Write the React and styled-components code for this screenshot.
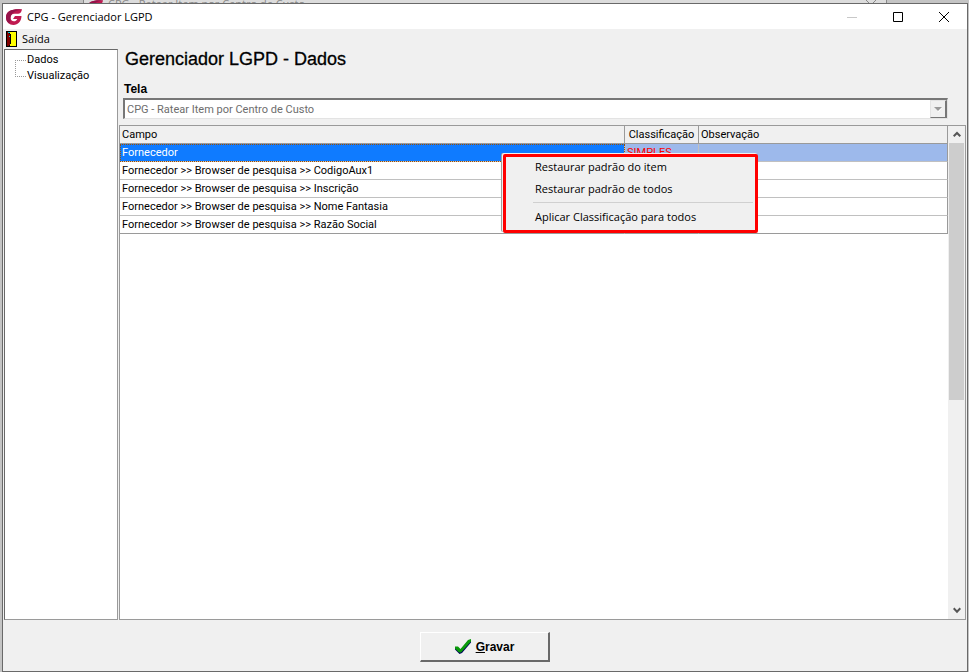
import React from 'react'
import styled, { createGlobalStyle } from 'styled-components'

const fields = [
    { id: 1, name: 'Fornecedor', level: 'SIMPLES', note: '' },
    { id: 2, name: 'Fornecedor >> Browser de pesquisa >> CodigoAux1', level: '', note: '' },
    { id: 3, name: 'Fornecedor >> Browser de pesquisa >> Inscrição', level: '', note: '' },
    { id: 4, name: 'Fornecedor >> Browser de pesquisa >> Nome Fantasia', level: '', note: '' },
    { id: 5, name: 'Fornecedor >> Browser de pesquisa >> Razão Social', level: '', note: '' },
]

const Logo = () => (
    <svg width="16" height="16" viewBox="0 0 16 16" aria-hidden="true">
        <path d="M16 0.300C12 0 6.500 0 3.500 2C1 3.700 0 5.800 0 8.500C0 12.800 3.300 16 7.500 16C12 16 15.300 12.500 15.500 7H9L7 10H11.300C10.500 11.600 9.300 12.300 8 12.300C5.800 12.300 4.500 10.700 4.500 8.600C4.500 6.300 6 4.800 8.500 4.800H12C14 4.800 15.500 3.500 16 0.300Z" fill="#c01a50" />
        <path d="M0 8.500C0 5.800 1 3.700 3.500 2C6.500 0 12 0 16 0.300C11 1.500 6 3 4.700 7.500C4 10 5 13 3 14.500C1.200 13.200 0 11 0 8.500Z" fill="#96134a" />
    </svg>
)

const Door = () => (
    <svg width="11" height="16" viewBox="0 0 11 16" aria-hidden="true" shapeRendering="crispEdges">
        <rect width="11" height="16" fill="#000" />
        <rect x="4" y="1" width="6" height="14" fill="#ff0" />
        <path d="M1 1H2V2H3V3H4V14H3V15H1Z" fill="#800000" />
        <path d="M4 3H5V13H4Z" fill="#000" />
        <path d="M2 1H4V2H2Z" fill="#00d8d8" />
        <path d="M3 5H4V6H3Z" fill="#00d8d8" />
    </svg>
)

const Check = () => (
    <svg width="17" height="16" viewBox="0 0 17 16" aria-hidden="true">
        <path d="M0 8.500H3L5.500 11L13 2L16 1V3.500L7 14L4.500 15L0 10.500Z" fill="#000060" />
        <path d="M0 7.500H3L5.500 10L13 1L16 0V2.500L6 13.500H4L0 9.500Z" fill="#0a9a0a" />
    </svg>
)

const Chevron = ({ down }) => (
    <svg width="8" height="7" viewBox="0 0 8 7" aria-hidden="true">
        <path d={down ? 'M0.700 1.300L4 4.700L7.300 1.300' : 'M0.700 5.300L4 2L7.300 5.300'} fill="none" stroke="#555" strokeWidth="2" />
    </svg>
)

function TitleBar() {
    return (
        <TitleWrapper>
            <Logo />
            <Title>CPG - Gerenciador LGPD</Title>
            <WindowButton aria-label="Minimizar" disabled>
                <svg width="10" height="10"><path d="M0 5.500H10" stroke="#c8c8c8" /></svg>
            </WindowButton>
            <WindowButton aria-label="Maximizar">
                <svg width="10" height="10"><path d="M0.500 0.500H9.500V9.500H0.500Z" fill="none" stroke="#000" /></svg>
            </WindowButton>
            <WindowButton aria-label="Fechar">
                <svg width="10" height="10"><path d="M0 0L10 10M10 0L0 10" stroke="#000" /></svg>
            </WindowButton>
        </TitleWrapper>
    )
}

function FieldGrid() {
    return (
        <GridWrapper>
            <TableWrapper>
                <Table>
                    <colgroup>
                        <col />
                        <LevelCol />
                        <NoteCol />
                    </colgroup>
                    <thead>
                        <tr>
                            <HeadCell>Campo</HeadCell>
                            <HeadCell $center>Classificação</HeadCell>
                            <HeadCell>Observação</HeadCell>
                        </tr>
                    </thead>
                    <tbody>
                        {fields.map((field, index) => (
                            <Row key={field.id} $selected={index === 0}>
                                <Cell $focused={index === 0}>{field.name}</Cell>
                                <Cell $alert>{field.level}</Cell>
                                <Cell>{field.note}</Cell>
                            </Row>
                        ))}
                    </tbody>
                </Table>
            </TableWrapper>
            <ScrollBar>
                <ScrollButton aria-label="Rolar para cima"><Chevron /></ScrollButton>
                <ScrollTrack><ScrollThumb /></ScrollTrack>
                <ScrollButton aria-label="Rolar para baixo"><Chevron down /></ScrollButton>
            </ScrollBar>
            <ContextMenu role="menu">
                <MenuItem role="menuitem">Restaurar padrão do item</MenuItem>
                <MenuItem role="menuitem">Restaurar padrão de todos</MenuItem>
                <MenuLine />
                <MenuItem role="menuitem">Aplicar Classificação para todos</MenuItem>
            </ContextMenu>
        </GridWrapper>
    )
}

function App() {
    return (
        <Desktop>
            <GlobalStyle />
            <BackWindow aria-hidden="true">
                <BackTitle>
                    <Logo />
                    <span>CPG - Ratear Item por Centro de Custo</span>
                </BackTitle>
                <svg width="10" height="10"><path d="M0 0L10 10M10 0L0 10" stroke="#888" /></svg>
            </BackWindow>
            <Window>
                <TitleBar />
                <MenuBar>
                    <MenuBarButton><Door />Saída</MenuBarButton>
                </MenuBar>
                <Body>
                    <Tree>
                        <TreeItem>Dados</TreeItem>
                        <TreeItem $last>Visualização</TreeItem>
                    </Tree>
                    <Main>
                        <Header>
                            <Heading>Gerenciador LGPD - Dados</Heading>
                            <Label htmlFor="tela">Tela</Label>
                            <Combo>
                                <Select id="tela" disabled>
                                    <option>CPG - Ratear Item por Centro de Custo</option>
                                </Select>
                                <ComboArrow>
                                    <svg width="8" height="5"><path d="M1 1H8L4.500 5Z" fill="#fff" /><path d="M0 0H8L4 4Z" fill="#999" /></svg>
                                </ComboArrow>
                            </Combo>
                        </Header>
                        <FieldGrid />
                    </Main>
                </Body>
                <Footer>
                    <SaveButton>
                        <Check />
                        <span><u>G</u>ravar</span>
                    </SaveButton>
                </Footer>
            </Window>
        </Desktop>
    )
}

export default App

const GlobalStyle = createGlobalStyle`
    * {
        box-sizing: border-box;
    }
    body {
        margin: 0;
        color: #000;
        font: 11px/16px Roboto, "Liberation Sans", sans-serif;
    }
    button, select {
        font: inherit;
        color: inherit;
        border: 0;
        padding: 0;
        margin: 0;
        background: none;
    }
    svg {
        display: block;
        flex: none;
    }
`
const Desktop = styled.div`
    display: flex;
    flex-direction: column;
    min-height: 100vh;
    padding: 0 1px 0 2px;
    background: #c4c4c4;
`
const BackWindow = styled.div`
    display: flex;
    align-items: flex-start;
    justify-content: space-between;
    height: 3px;
    margin: 0 81px;
    padding: 0 10px 0 3px;
    overflow: hidden;
    background: #dcdcdc;
    border-left: 1px solid #888;
    border-right: 1px solid #888;
`
const BackTitle = styled.div`
    display: flex;
    gap: 5px;
    color: #888;
    font: 11px/8px "Open Sans", sans-serif;
`
const Window = styled.div`
    display: flex;
    flex-direction: column;
    flex: 1;
    border: 1px solid #696969;
    background: #f0f0f0;
`
const TitleWrapper = styled.header`
    display: flex;
    align-items: center;
    height: 25px;
    padding-left: 3px;
    background: #fff;
`
const Title = styled.h1`
    flex: 1;
    margin: 0 0 0 5px;
    font: 11px/16px "Open Sans", sans-serif;
`
const WindowButton = styled.button`
    display: grid;
    place-items: center;
    width: 46px;
    height: 25px;
`
const MenuBar = styled.nav`
    display: flex;
    height: 20px;
    padding-left: 3px;
`
const MenuBarButton = styled.button`
    display: flex;
    align-items: center;
    gap: 5px;
    font: 11px/16px "Open Sans", sans-serif;
`
const Body = styled.div`
    display: flex;
    flex: 1;
    padding: 0 1px;
`
const Tree = styled.ul`
    width: 114px;
    margin: 0 1px 0 0;
    padding: 2px 0 0 10px;
    list-style: none;
    background: #fff;
    border: 1px solid #9a9a9a;
    border-top-color: #696969;
    border-left-color: #696969;
`
const TreeItem = styled.li`
    display: flex;
    height: 16px;

    &::before {
        content: '';
        width: 10px;
        height: ${props => props.$last ? '16px' : '8px'};
        margin: ${props => props.$last ? '-8px 1px 0 0' : '8px 1px 0 0'};
        border-top: ${props => props.$last ? '0' : '1px dotted #999'};
        border-bottom: ${props => props.$last ? '1px dotted #999' : '0'};
        border-left: 1px dotted #999;
    }
`
const Main = styled.main`
    display: flex;
    flex-direction: column;
    flex: 1;
    min-width: 0;
`
const Header = styled.div`
    padding: 0 18px 6px 4px;
`
const Heading = styled.h2`
    margin: 0;
    padding-left: 2px;
    font: 18px/20px "Liberation Sans", Arial, sans-serif;
    -webkit-text-stroke: 0.3px #000;
`
const Label = styled.label`
    display: block;
    padding: 12px 0 0 1px;
    font: bold 12px/16px "Liberation Sans", Arial, sans-serif;
`
const Combo = styled.div`
    display: flex;
    height: 21px;
    margin-top: 1px;
    background: #fff;
    border: 1px solid #e3e3e3;
    border-top: 2px solid #777;
    border-left: 2px solid #777;
`
const Select = styled.select`
    flex: 1;
    appearance: none;
    padding: 1px 0 0 2px;
    color: #6d6d6d;
    opacity: 1;
`
const ComboArrow = styled.span`
    display: grid;
    place-items: center;
    width: 17px;
    background: #f0f0f0;
    border: 1px solid #e3e3e3;
    border-right: 2px solid #777;
    border-bottom: 1px solid #777;
`
const GridWrapper = styled.section`
    position: relative;
    display: flex;
    flex: 1;
    background: #fff;
    border: 1px solid #9a9a9a;
`
const TableWrapper = styled.div`
    flex: 1;
    min-width: 0;
`
const Table = styled.table`
    width: 100%;
    table-layout: fixed;
    border-spacing: 0;
`
const LevelCol = styled.col`
    width: 74px;
`
const NoteCol = styled.col`
    width: 249px;
`
const HeadCell = styled.th`
    height: 18px;
    padding: 1px 2px 0;
    font-weight: normal;
    text-align: ${props => props.$center ? 'center' : 'left'};
    white-space: nowrap;
    background: #f0f0f0;
    border-right: 1px solid #9a9a9a;
    border-bottom: 1px solid #9a9a9a;
`
const Row = styled.tr`
    background: ${props => props.$selected ? '#9db9eb' : '#fff'};
`
const Cell = styled.td`
    height: 18px;
    padding: 1px 2px 0;
    white-space: nowrap;
    color: ${props => props.$focused ? '#fff' : props.$alert ? '#f00' : '#000'};
    background: ${props => props.$focused ? '#0f7bff' : 'transparent'};
    outline: ${props => props.$focused ? '1px dotted #a05000' : 'none'};
    outline-offset: -1px;
    border-right: 1px solid #c0c0c0;
    border-bottom: 1px solid #c0c0c0;

    &:last-child {
        border-right-color: #9a9a9a;
    }
    tr:last-child > & {
        border-bottom-color: #9a9a9a;
    }
`
const ScrollBar = styled.div`
    display: flex;
    flex-direction: column;
    width: 17px;
    padding: 0 1px;
    background: #f0f0f0;
`
const ScrollButton = styled.button`
    display: grid;
    place-items: center;
    height: 17px;
`
const ScrollTrack = styled.div`
    flex: 1;
`
const ScrollThumb = styled.div`
    height: 56%;
    background: #cdcdcd;
`
const ContextMenu = styled.div`
    position: absolute;
    top: 28px;
    left: 383px;
    width: 255px;
    padding: 0 2px 1px;
    background: #f0f0f0;
    border: 3px solid #f00;
    border-radius: 2px;
    box-shadow: -1px -1px 0 #f0f0f0, -2px -1px 0 #a0a0a0;
`
const MenuItem = styled.button`
    display: block;
    width: 100%;
    height: 22px;
    padding: 0 0 2px 27px;
    text-align: left;
    font: 11px/20px "Open Sans", sans-serif;
`
const MenuLine = styled.hr`
    height: 1px;
    margin: 1px 0 4px 25px;
    border: 0;
    background: #d0d0d0;
`
const Footer = styled.footer`
    display: flex;
    justify-content: center;
    padding: 12px 0 9px;
`
const SaveButton = styled.button`
    display: flex;
    align-items: center;
    justify-content: center;
    gap: 4px;
    width: 130px;
    height: 30px;
    font: bold 12px/16px "Liberation Sans", Arial, sans-serif;
    border: 1px solid #fff;
    border-right: 2px solid #696969;
    border-bottom: 2px solid #696969;
`
